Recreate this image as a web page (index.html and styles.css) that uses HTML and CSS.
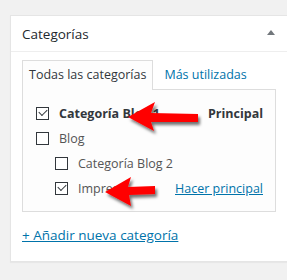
FILE: index.html
```html
<!DOCTYPE html>
<html lang="es">
<head>
    <meta charset="UTF-8">
    <title>Categorías</title>
    <link rel="stylesheet" href="styles.css">
</head>
<body>

<div class="postbox">
    <div class="postbox-header">
        <h2>Categorías</h2>
        <span class="toggle-arrow"></span>
    </div>

    <div class="inside">
        <ul class="tabs">
            <li class="tab active">Todas las categorías</li>
            <li class="tab"><a href="#">Más utilizadas</a></li>
        </ul>

        <div class="tabs-panel">
            <ul class="cat-list">
                <li class="cat-row">
                    <span class="check checked"></span>
                    <span class="cat-name primary">Categoría Blog 1</span>
                    <span class="row-action bold">Principal</span>
                </li>
                <li class="cat-row">
                    <span class="check"></span>
                    <span class="cat-name">Blog</span>
                </li>
                <li class="cat-row child">
                    <span class="check"></span>
                    <span class="cat-name">Categoría Blog 2</span>
                </li>
                <li class="cat-row child">
                    <span class="check checked"></span>
                    <span class="cat-name">Impreso</span>
                    <a class="row-action" href="#">Hacer principal</a>
                </li>
            </ul>
        </div>

        <p class="add-new"><a href="#">+ Añadir nueva categoría</a></p>
    </div>
</div>

<!-- red arrows drawn over the screenshot -->
<svg class="arrows" width="287" height="280" viewBox="0 0 287 280">
    <defs>
        <filter id="shadow" x="-20%" y="-30%" width="150%" height="180%">
            <feDropShadow dx="2" dy="3" stdDeviation="1.8" flood-color="#000" flood-opacity="0.55"/>
        </filter>
    </defs>
    <polygon filter="url(#shadow)" fill="#f00" points="128,117 155,102 151,113 198,114 198,122 151,122 154,131"/>
    <polygon filter="url(#shadow)" fill="#f00" points="105,192 131,177 128,187 155,186 155,194 129,195 131,206"/>
</svg>

</body>
</html>
```

FILE: styles.css
```css
body {
    margin: 0;
    padding: 15px 0 0 10px;
    background-color: #f1f1f1;
    font-family: 'Open Sans', sans-serif;
    font-size: 12.5px;
    color: #555;
    overflow: hidden;
    height: 265px;
}

a {
    color: #0073aa;
}

.postbox {
    width: 277px;
    background-color: #fff;
    border: 1px solid #e5e5e5;
    border-right: none;
    box-shadow: 0 1px 1px rgba(0, 0, 0, 0.04);
    height: 247px;
    box-sizing: border-box;
}

.postbox-header {
    display: flex;
    align-items: center;
    justify-content: space-between;
    height: 35px;
    border-bottom: 1px solid #eee;
    padding: 0 0 0 11px;
}

.postbox-header h2 {
    margin: 0;
    font-size: 13.5px;
    font-weight: 400;
    color: #23282d;
}

.toggle-arrow {
    width: 0;
    height: 0;
    border-left: 4px solid transparent;
    border-right: 4px solid transparent;
    border-bottom: 5px solid #72777c;
    margin-right: 12px;
    margin-top: -2px;
}

.inside {
    padding: 8px 0 0 11px;
}

.tabs {
    list-style: none;
    margin: 0;
    padding: 0;
    display: flex;
    position: relative;
    z-index: 1;
}

.tab {
    padding: 0 6px;
    height: 28px;
    line-height: 27px;
    border: 1px solid transparent;
    border-bottom: none;
    margin-right: 4px;
}

.tab a {
    text-decoration: none;
}

.tab.active {
    border-color: #ddd;
    background-color: #fdfdfd;
    color: #32373c;
    height: 29px;
    margin-bottom: -1px;
}

.tabs-panel {
    width: 254px;
    box-sizing: border-box;
    border: 1px solid #ddd;
    background-color: #fdfdfd;
    padding: 11px 0 10px 13px;
}

.cat-list {
    list-style: none;
    margin: 0;
    padding: 0;
}

.cat-row {
    display: flex;
    align-items: center;
    height: 25px;
    padding-right: 12px;
}

.cat-row.child {
    padding-left: 19px;
}

.check {
    width: 13px;
    height: 13px;
    box-sizing: border-box;
    border: 1px solid #32373c;
    background-color: #fff;
    position: relative;
    flex-shrink: 0;
    margin-right: 10px;
}

.check.checked::after {
    content: "";
    position: absolute;
    left: 2px;
    top: 1px;
    width: 7px;
    height: 4px;
    border-left: 1px solid #32373c;
    border-bottom: 1px solid #32373c;
    transform: rotate(-45deg);
}

.cat-name {
    color: #555;
}

.cat-name.primary {
    font-weight: 700;
    color: #32373c;
}

.row-action {
    margin-left: auto;
}

.row-action.bold {
    font-weight: 700;
    color: #32373c;
}

.add-new {
    margin: 14px 0 0;
    font-size: 13.5px;
}

.arrows {
    position: absolute;
    left: 0;
    top: 0;
}
```
